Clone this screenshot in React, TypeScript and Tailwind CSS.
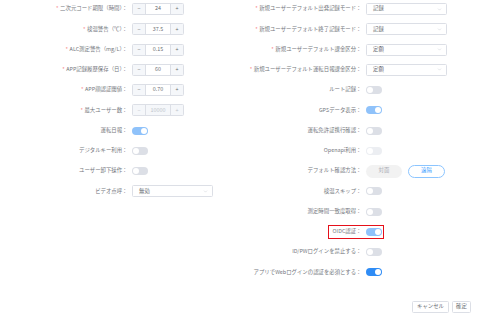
import { ChevronDown } from "lucide-react";

type Row =
  | { label: string; req?: boolean; kind: "num"; value: string; disabled?: boolean }
  | { label: string; req?: boolean; kind: "switch"; on: boolean; disabled?: boolean; mark?: boolean }
  | { label: string; req?: boolean; kind: "select"; value: string }
  | { label: string; req?: boolean; kind: "pills" };

const left: Row[] = [
  { label: "二次元コード期限（時間）：", req: true, kind: "num", value: "24" },
  { label: "検温警告（℃）：", req: true, kind: "num", value: "37.5" },
  { label: "ALC測定警告（mg/L）：", req: true, kind: "num", value: "0.15" },
  { label: "APP記録履歴保存（日）：", req: true, kind: "num", value: "60" },
  { label: "APP顔認証閾値：", req: true, kind: "num", value: "0.70" },
  { label: "最大ユーザー数：", req: true, kind: "num", value: "10000", disabled: true },
  { label: "運転日報：", kind: "switch", on: true, disabled: true },
  { label: "デジタルキー利用：", kind: "switch", on: false },
  { label: "ユーザー卸下操作：", kind: "switch", on: false },
  { label: "ビデオ点呼：", kind: "select", value: "無効" },
];

const right: Row[] = [
  { label: "新規ユーザーデフォルト出発記録モード：", req: true, kind: "select", value: "記録" },
  { label: "新規ユーザーデフォルト終了記録モード：", req: true, kind: "select", value: "記録" },
  { label: "新規ユーザーデフォルト課金区分：", req: true, kind: "select", value: "定額" },
  { label: "新規ユーザーデフォルト運転日報課金区分：", req: true, kind: "select", value: "定額" },
  { label: "ルート記録：", kind: "switch", on: false },
  { label: "GPSデータ表示：", kind: "switch", on: true, disabled: true },
  { label: "運転免許証携行確認：", kind: "switch", on: false },
  { label: "Openapi利用：", kind: "switch", on: false, disabled: true },
  { label: "デフォルト確認方法：", kind: "pills" },
  { label: "検温スキップ：", kind: "switch", on: false },
  { label: "測定時間一致度取得：", kind: "switch", on: false },
  { label: "OIDC認証：", kind: "switch", on: true, disabled: true, mark: true },
  { label: "ID/PWログインを禁止する：", kind: "switch", on: false },
  { label: "アプリでWebログインの認証を必須とする：", kind: "switch", on: true },
];

function Control({ row }: { row: Row }) {
  if (row.kind === "num") {
    const tone = row.disabled ? "text-[#c0c4cc]" : "text-[#6b6e74]";
    return (
      <div className={`flex h-[12px] w-[52px] rounded-[1.5px] border border-[#dcdfe6] ${row.disabled ? "bg-[#f5f7fa]" : "bg-white"}`}>
        <span className={`flex w-[13px] items-center justify-center border-r border-[#dcdfe6] bg-[#f5f7fa] ${tone}`}>−</span>
        <span className={`flex flex-1 items-center justify-center ${tone}`}>{row.value}</span>
        <span className={`flex w-[13px] items-center justify-center border-l border-[#dcdfe6] bg-[#f5f7fa] ${tone}`}>+</span>
      </div>
    );
  }
  if (row.kind === "select") {
    return (
      <div className="flex h-[12px] w-[81px] items-center justify-between rounded-[1.5px] border border-[#dcdfe6] bg-white pl-[6px] pr-[4px] text-[#6b6e74]">
        <span>{row.value}</span>
        <ChevronDown className="h-[5px] w-[5px] text-[#c0c4cc]" strokeWidth={2} />
      </div>
    );
  }
  if (row.kind === "pills") {
    return (
      <div className="flex gap-[6px]">
        <span className="flex h-[13px] w-[36px] items-center justify-center rounded-full bg-[#f2f2f2] text-[#a8abb2]">対面</span>
        <span className="flex h-[13px] w-[37px] items-center justify-center rounded-full border border-[#8cc5ff] bg-white text-[#409eff]">遠隔</span>
      </div>
    );
  }
  const bg = row.on
    ? row.disabled
      ? "bg-[#8fc2fa]"
      : "bg-[#2f8cf5]"
    : row.disabled
      ? "bg-[#eceef2]"
      : "bg-[#dcdfe6]";
  return (
    <span className={`flex h-[8px] w-[16px] items-center rounded-full px-[1px] ${bg} ${row.on ? "justify-end" : "justify-start"}`}>
      <span className="h-[6px] w-[6px] rounded-full bg-white" />
    </span>
  );
}

function Column({ rows, labelW }: { rows: Row[]; labelW: string }) {
  return (
    <div className="w-[240px]">
      {rows.map((r) => (
        <div key={r.label} className="relative mb-[8.25px] flex h-[12px] items-center">
          <label className={`${labelW} shrink-0 whitespace-nowrap pr-[4.5px] text-right text-[#75787e]`}>
            {r.req && <span className="mr-[1.5px] text-[#f56c6c]">*</span>}
            {r.label}
          </label>
          <Control row={r} />
          {r.kind === "switch" && r.mark && (
            <span className="absolute left-[88px] top-[-1px] h-[14px] w-[56px] border border-[#e5101a]" />
          )}
        </div>
      ))}
    </div>
  );
}

export default function App() {
  return (
    <div
      className="relative h-[317px] w-[480px] overflow-hidden bg-white text-[5.4px] leading-none"
      style={{ fontFamily: '"Noto Sans CJK JP", "Noto Sans", sans-serif' }}
    >
      <div className="flex pt-[3px]">
        <Column rows={left} labelW="w-[132px]" />
        <Column rows={right} labelW="w-[126px]" />
      </div>
      <div className="absolute bottom-[4px] right-[9px] flex gap-[3px]">
        <button className="h-[12px] w-[37px] rounded-[1.5px] border border-[#dcdfe6] bg-white text-[#6b6e74]">キャンセル</button>
        <button className="h-[12px] w-[19px] rounded-[1.5px] border border-[#dcdfe6] bg-white text-[#6b6e74]">確定</button>
      </div>
    </div>
  );
}
